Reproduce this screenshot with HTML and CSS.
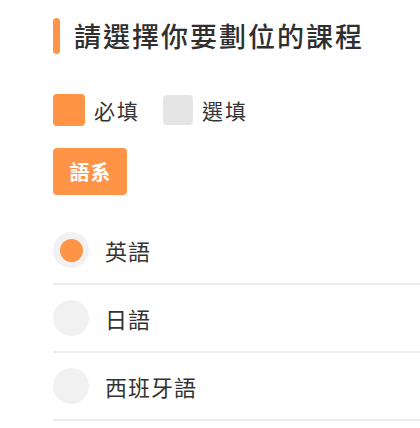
FILE: index.html
```html
<!DOCTYPE html>
<html lang="zh-Hant">
<head>
<meta charset="utf-8">
<link rel="stylesheet" href="styles.css">
</head>
<body>
<div class="page">
  <h1 class="title"><span class="title-bar"></span><span class="title-text">請選擇你要劃位的課程</span></h1>
  <div class="legend">
    <div class="legend-item"><span class="swatch swatch-required"></span><span class="legend-label">必填</span></div>
    <div class="legend-item"><span class="swatch swatch-optional"></span><span class="legend-label">選填</span></div>
  </div>
  <button class="tag-btn">語系</button>
  <ul class="options">
    <li class="option selected"><span class="radio"><span class="radio-dot"></span></span><span class="option-label">英語</span></li>
    <li class="option"><span class="radio"></span><span class="option-label">日語</span></li>
    <li class="option"><span class="radio"></span><span class="option-label">西班牙語</span></li>
  </ul>
</div>
</body>
</html>
```

FILE: styles.css
```css
* { box-sizing: border-box; }
html, body { margin: 0; padding: 0; background: #fff; }
body {
  font-family: "Noto Sans CJK TC", "Noto Sans", sans-serif;
  color: #333;
  overflow: hidden;
}
.page {
  padding: 18px 0 0 53px;
}
.title {
  display: flex;
  align-items: center;
  gap: 14px;
  margin: 0;
  height: 36px;
  font-size: 27px;
  font-weight: 500;
  letter-spacing: 2px;
  color: #2f2f2f;
}
.title-bar {
  width: 7px;
  height: 36px;
  border-radius: 4px;
  background: #ff9346;
  flex: none;
}
.title-text { line-height: 36px; }
.legend {
  display: flex;
  align-items: center;
  gap: 22px;
  margin-top: 40px;
  height: 32px;
}
.legend-item {
  display: flex;
  align-items: center;
  gap: 9px;
}
.swatch {
  display: block;
  border-radius: 4px;
}
.swatch-required { width: 32px; height: 32px; background: #ff9346; }
.swatch-optional { width: 30px; height: 30px; background: #e5e5e5; margin-left: 1px; }
.legend-label {
  font-size: 21px;
  letter-spacing: 2px;
  color: #333;
}
.tag-btn {
  display: block;
  margin-top: 22px;
  width: 74px;
  height: 47px;
  border: none;
  border-radius: 4px;
  background: #ff9346;
  color: #fff;
  font-family: inherit;
  font-size: 20px;
  font-weight: 700;
  letter-spacing: 1px;
  padding: 0 0 0 1px;
}
.options {
  list-style: none;
  margin: 22px 0 0;
  padding: 0;
}
.option {
  display: flex;
  align-items: center;
  gap: 16px;
  padding: 15px 0;
  border-bottom: 2px solid #ececec;
}
.radio {
  width: 36px;
  height: 36px;
  border-radius: 50%;
  background: #f1f1f1;
  display: flex;
  align-items: center;
  justify-content: center;
  flex: none;
}
.radio-dot {
  width: 23px;
  height: 23px;
  border-radius: 50%;
  background: #ff9346;
}
.option-label {
  font-size: 22px;
  letter-spacing: 1px;
  color: #333;
}
```
